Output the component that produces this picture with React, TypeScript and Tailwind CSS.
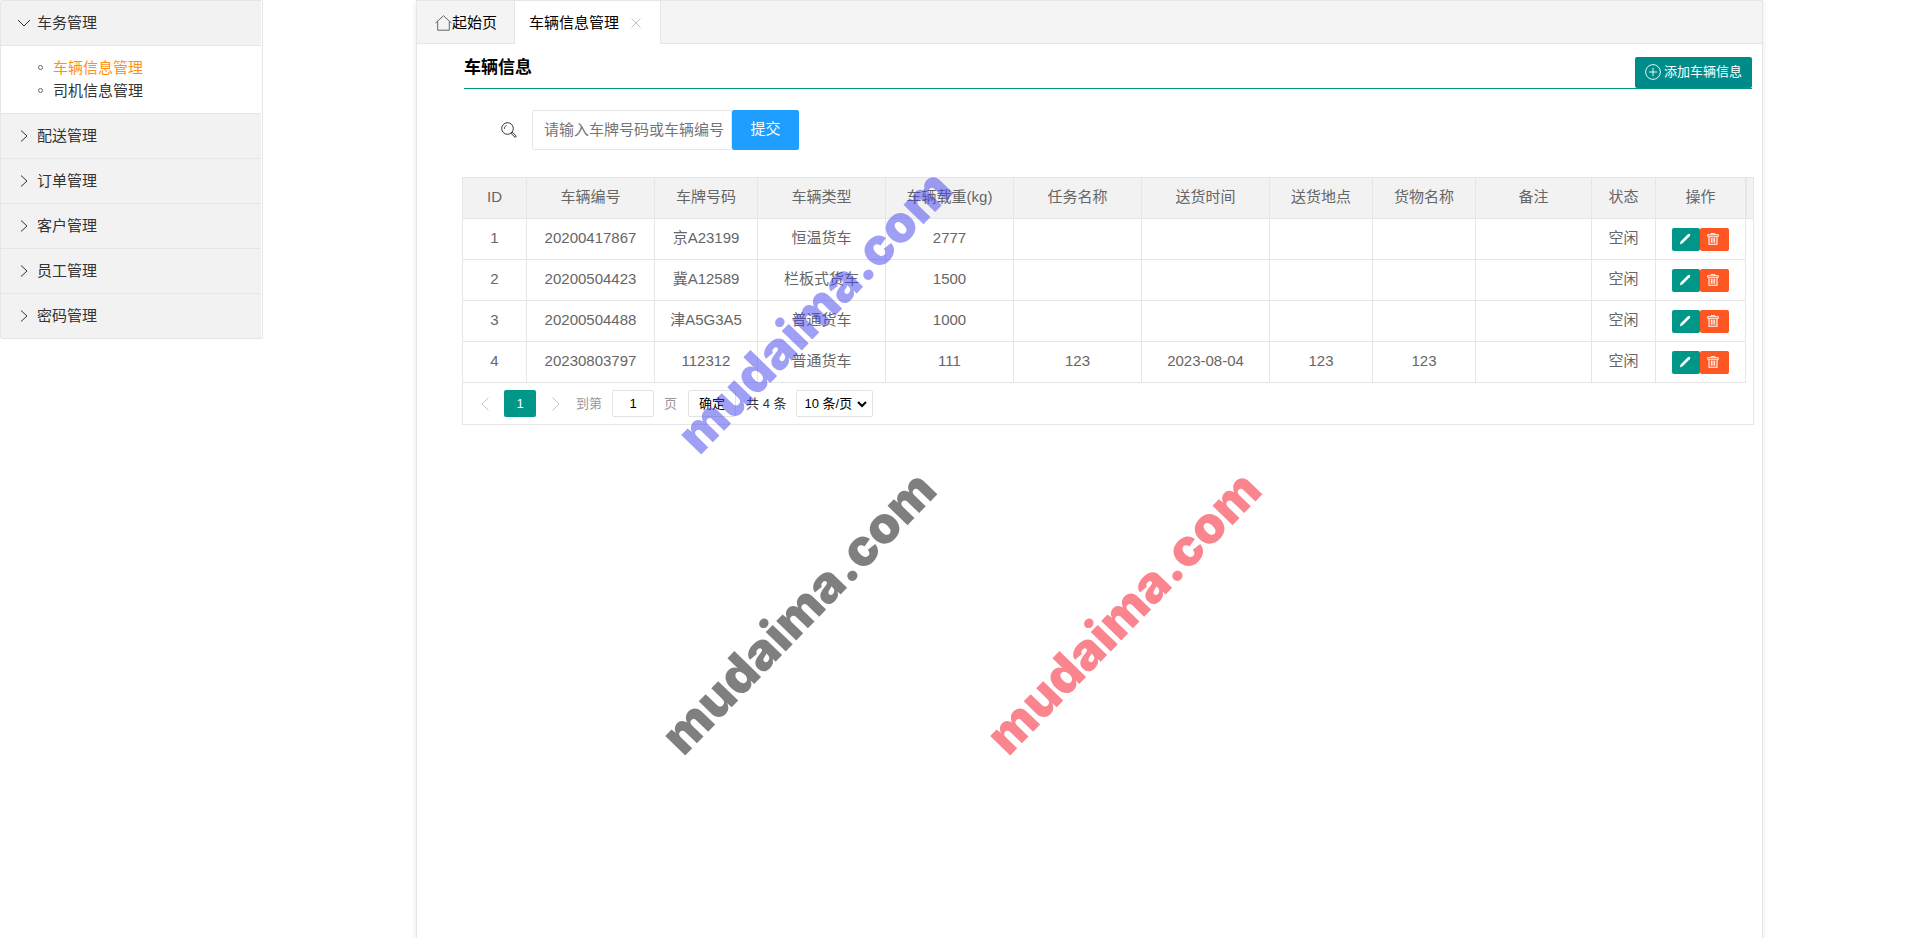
import type { ReactNode } from "react";

type Vehicle = {
  id: number;
  code: string;
  plate: string;
  type: string;
  load: string;
  task?: string;
  date?: string;
  place?: string;
  goods?: string;
  remark?: string;
  status: string;
};

const vehicles: Vehicle[] = [
  { id: 1, code: "20200417867", plate: "京A23199", type: "恒温货车", load: "2777", status: "空闲" },
  { id: 2, code: "20200504423", plate: "冀A12589", type: "栏板式货车", load: "1500", status: "空闲" },
  { id: 3, code: "20200504488", plate: "津A5G3A5", type: "普通货车", load: "1000", status: "空闲" },
  {
    id: 4, code: "20230803797", plate: "112312", type: "普通货车", load: "111",
    task: "123", date: "2023-08-04", place: "123", goods: "123", status: "空闲",
  },
];

const columns = [
  { title: "ID", width: "w-[64px]" },
  { title: "车辆编号", width: "w-[128px]" },
  { title: "车牌号码", width: "w-[103px]" },
  { title: "车辆类型", width: "w-[128px]" },
  { title: "车辆载重(kg)", width: "w-[128px]" },
  { title: "任务名称", width: "w-[128px]" },
  { title: "送货时间", width: "w-[128px]" },
  { title: "送货地点", width: "w-[103px]" },
  { title: "货物名称", width: "w-[103px]" },
  { title: "备注", width: "w-[116px]" },
  { title: "状态", width: "w-[64px]" },
  { title: "操作", width: "w-[90px]" },
];

const closedMenus = ["配送管理", "订单管理", "客户管理", "员工管理", "密码管理"];

function Chevron({ className, d }: { className: string; d: string }) {
  return (
    <svg className={className} viewBox="0 0 14 14" fill="none" stroke="currentColor" aria-hidden="true">
      <path d={d} />
    </svg>
  );
}

const RIGHT = "M4 1.5 L10 7 L4 12.5";
const DOWN = "M1 4 L7 10 L13 4";
const PREV = "M10.5 0.5 L4 7 L10.5 13.5";
const NEXT = "M3.5 0.5 L10 7 L3.5 13.5";

function HomeIcon() {
  return (
    <svg className="h-4 w-[17px]" viewBox="0 0 17 16" fill="none" stroke="#555" strokeWidth="0.9" aria-hidden="true">
      <path d="M0.5 8 L8.5 0.8 L16.5 8" />
      <path d="M2.7 6.5 V15.2 H14.3 V6.5" />
    </svg>
  );
}

function SearchIcon() {
  return (
    <svg className="h-4 w-4" viewBox="0 0 16 16" fill="none" stroke="#333" aria-hidden="true">
      <circle cx="6.5" cy="6.5" r="5.8" strokeWidth="1" />
      <path d="M3.4 7 A3.2 3.2 0 0 1 5.6 3.5" strokeWidth="0.8" />
      <path d="M11 10 L15.3 14 L14.2 15.3 L9.8 11.2 Z" strokeWidth="1" />
    </svg>
  );
}

function PlusIcon() {
  return (
    <svg className="h-4 w-4" viewBox="0 0 16 16" fill="none" stroke="currentColor" strokeWidth="0.9" aria-hidden="true">
      <circle cx="8" cy="8" r="7.4" />
      <path d="M8 4 V12 M4 8 H12" />
    </svg>
  );
}

function PencilIcon() {
  return (
    <svg className="h-3 w-3" viewBox="0 0 12 12" fill="currentColor" aria-hidden="true">
      <path d="M0.8 11.4 L1.8 8.3 L8.8 1.2 Q10 0.2 11 1.1 Q11.7 2.1 10.7 3.2 L3.7 10.2 Z" />
    </svg>
  );
}

function TrashIcon() {
  return (
    <svg className="h-3 w-3" viewBox="0 0 12 12" fill="none" stroke="currentColor" aria-hidden="true">
      <path d="M4 1.5 V0.6 H8 V1.5" strokeWidth="0.9" />
      <path d="M0.6 1.7 H11.4 V3.3 H0.6 Z" strokeWidth="0.9" />
      <path d="M2 3.5 V11.3 H10 V3.5" strokeWidth="1.1" />
      <path d="M4.3 4.5 V9.8 M6 4.5 V9.8 M7.7 4.5 V9.8" strokeWidth="1" />
    </svg>
  );
}

function Sidebar() {
  return (
    <nav className="w-[263px] shrink-0 self-start rounded-xs border border-[#e6e6e6] pr-px">
      <button type="button" className="flex h-11 w-full items-center gap-1.5 bg-[#f2f2f2] pl-4">
        <Chevron className="h-3.5 w-3.5" d={DOWN} />
        车务管理
      </button>
      <ul className="border-t border-[#e6e6e6] pt-2.5 pb-[11px] pl-[37px] leading-[23px]">
        <li className="flex items-center gap-2.5">
          <span className="h-[5px] w-[5px] rounded-full border border-[#666]" />
          <a href="#vehicles" className="text-[#ff9117]">车辆信息管理</a>
        </li>
        <li className="flex items-center gap-2.5">
          <span className="h-[5px] w-[5px] rounded-full border border-[#666]" />
          <a href="#drivers">司机信息管理</a>
        </li>
      </ul>
      {closedMenus.map((title) => (
        <button
          key={title}
          type="button"
          className="flex h-[45px] w-full items-center gap-1.5 border-t border-[#e6e6e6] bg-[#f2f2f2] pl-4"
        >
          <Chevron className="h-3.5 w-3.5" d={RIGHT} />
          {title}
        </button>
      ))}
    </nav>
  );
}

function Tabs() {
  return (
    <div className="flex h-[43px] border-b border-[#e6e6e6] bg-[#f4f4f4] text-black">
      <button type="button" className="flex items-center pt-0.5 pr-[17px] pl-[18px]">
        <HomeIcon />
        起始页
      </button>
      <div className="-mb-px flex items-center gap-3 border-x border-[#e6e6e6] bg-white pt-px pr-[19px] pl-3.5">
        <button type="button">车辆信息管理</button>
        <button type="button" aria-label="关闭" className="text-[#c2c2c2]">
          <svg className="h-2.5 w-2.5" viewBox="0 0 10 10" stroke="currentColor" aria-hidden="true">
            <path d="M0.5 0.5 L9.5 9.5 M9.5 0.5 L0.5 9.5" />
          </svg>
        </button>
      </div>
    </div>
  );
}

function Cell({ children }: { children?: ReactNode }) {
  return <td className="border-r border-b border-[#e6e6e6] p-0 pb-0.5 text-center">{children}</td>;
}

function VehicleTable() {
  return (
    <table className="w-full table-fixed border-separate border-spacing-0 leading-5 text-[#666]">
      <thead>
        <tr className="h-[41px] bg-[#f2f2f2]">
          {columns.map((col) => (
            <th key={col.title} className={`${col.width} border-r border-b border-[#e6e6e6] p-0 pb-0.5 font-normal`}>
              {col.title}
            </th>
          ))}
          <th className="border-b border-l border-[#e6e6e6] p-0" />
        </tr>
      </thead>
      <tbody>
        {vehicles.map((v) => (
          <tr key={v.id} className="h-[41px]">
            <Cell>{v.id}</Cell>
            <Cell>{v.code}</Cell>
            <Cell>{v.plate}</Cell>
            <Cell>{v.type}</Cell>
            <Cell>{v.load}</Cell>
            <Cell>{v.task}</Cell>
            <Cell>{v.date}</Cell>
            <Cell>{v.place}</Cell>
            <Cell>{v.goods}</Cell>
            <Cell>{v.remark}</Cell>
            <Cell>{v.status}</Cell>
            <Cell>
              <div className="flex justify-center pt-0.5 text-white">
                <button type="button" aria-label="编辑" className="flex h-[23px] w-7 items-center justify-center rounded-xs bg-[#009688] pr-0.5">
                  <PencilIcon />
                </button>
                <button type="button" aria-label="删除" className="flex h-[23px] w-[29px] items-center justify-center rounded-xs bg-[#ff5722] pr-[3px]">
                  <TrashIcon />
                </button>
              </div>
            </Cell>
            <td className="p-0" />
          </tr>
        ))}
      </tbody>
      <tfoot>
        <tr>
          <td colSpan={columns.length + 1} className="p-0">
            <Pagination />
          </td>
        </tr>
      </tfoot>
    </table>
  );
}

function Pagination() {
  return (
    <div className="flex h-[41px] items-center pl-[15px] text-[13px] text-[#333]">
      <button type="button" aria-label="上一页" className="text-[#c8c8c8]">
        <Chevron className="h-3.5 w-3.5" d={PREV} />
      </button>
      <button type="button" className="ml-3 h-[27px] w-8 rounded-xs bg-[#009688] text-white">1</button>
      <button type="button" aria-label="下一页" className="ml-[13px] text-[#c8c8c8]">
        <Chevron className="h-3.5 w-3.5" d={NEXT} />
      </button>
      <label className="ml-[13px] flex items-center gap-2.5 text-[#999]">
        到第
        <input
          type="text"
          defaultValue="1"
          className="h-[27px] w-[42px] rounded-xs border border-[#e2e2e2] text-center text-black"
        />
        页
      </label>
      <button type="button" className="ml-[11px] h-[27px] w-12 rounded-xs border border-[#e2e2e2] text-black">确定</button>
      <span className="ml-2.5">共 4 条</span>
      <div className="relative ml-[9px]">
        <select
          aria-label="每页条数"
          className="h-[27px] w-[77px] appearance-none rounded-xs border border-[#e2e2e2] bg-white pl-2 text-black"
        >
          <option>10 条/页</option>
          <option>20 条/页</option>
        </select>
        <svg
          className="pointer-events-none absolute top-2.5 right-1.5 h-2 w-2.5"
          viewBox="0 0 10 8"
          fill="none"
          stroke="#000"
          strokeWidth="2"
          aria-hidden="true"
        >
          <path d="M1 2 L5 6 L9 2" />
        </svg>
      </div>
    </div>
  );
}

function Watermark({ place }: { place: string }) {
  return (
    <span
      className={`pointer-events-none absolute ${place} -translate-x-1/2 -translate-y-1/2 -rotate-46 font-[Inter,sans-serif] text-[51px] leading-none font-black`}
    >
      mudaima.com
    </span>
  );
}

export default function App() {
  return (
    <div className="relative flex min-h-screen overflow-hidden bg-white font-['Liberation_Sans','Noto_Sans_CJK_SC',sans-serif] text-[15px] text-[#333]">
      <Sidebar />
      <main className="mr-[157px] ml-[153px] min-w-0 flex-1 border-x border-t border-[#e6e6e6] shadow-[0_2px_5px_0_rgba(0,0,0,0.1)]">
        <Tabs />
        <div className="pt-[13px] pr-2 pl-[45px]">
          <div className="mr-0.5 ml-0.5 flex items-end justify-between border-b border-[#009688]">
            <h1 className="self-start text-[17px] leading-[22px] font-bold text-black">车辆信息</h1>
            <button
              type="button"
              className="flex h-[31px] items-center gap-[3px] rounded-xs bg-[#008b8b] px-2.5 pb-0.5 text-[13px] text-white"
            >
              <PlusIcon />
              添加车辆信息
            </button>
          </div>
          <form className="mt-[21px] flex items-center pl-[39px]">
            <label htmlFor="keyword" aria-label="搜索">
              <SearchIcon />
            </label>
            <input
              id="keyword"
              type="text"
              placeholder="请输入车牌号码或车辆编号"
              className="ml-[15px] h-10 w-[200px] rounded-xs border border-[#e6e6e6] pb-0.5 pl-[11px] placeholder:text-[#757575]"
            />
            <button type="button" className="h-10 w-[67px] rounded-xs bg-[#1e9fff] pb-0.5 text-white">提交</button>
          </form>
          <div className="mt-[27px] border border-[#e6e6e6]">
            <VehicleTable />
          </div>
        </div>
      </main>
      <Watermark place="top-[311px] left-[814px] text-[#4040eb]/50" />
      <Watermark place="top-[612px] left-[798px] text-black/50" />
      <Watermark place="top-[612px] left-[1123px] text-[#f80c20]/50" />
    </div>
  );
}
